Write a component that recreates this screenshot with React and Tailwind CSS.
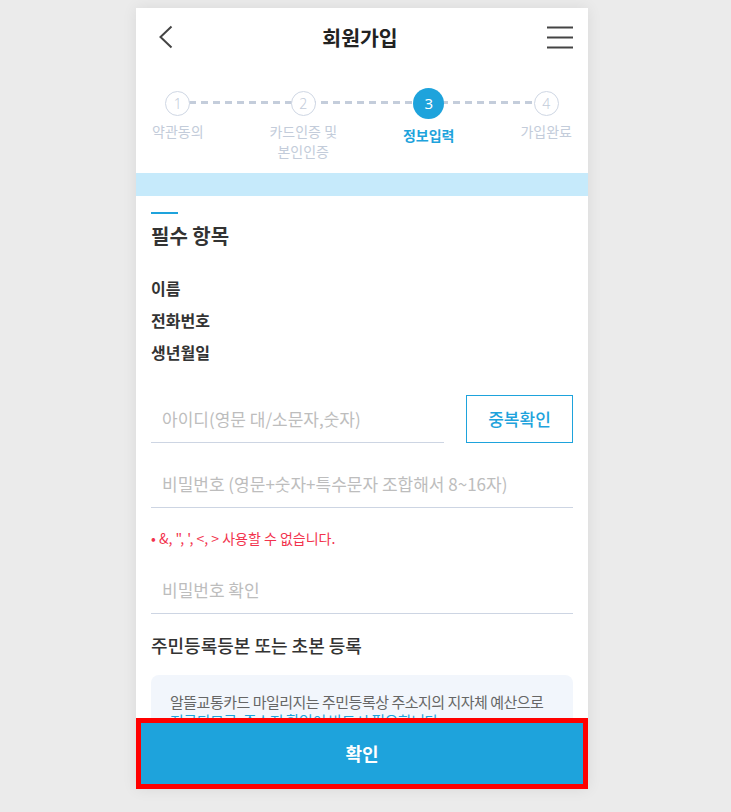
const steps = [
  { no: 1, label: ["약관동의"] },
  { no: 2, label: ["카드인증 및", "본인인증"] },
  { no: 3, label: ["정보입력"], active: true },
  { no: 4, label: ["가입완료"] },
];

const Stepper = () => (
  <div className="relative h-[107px] px-[16px] pt-[21px]">
    <div className="absolute left-[41px] right-[42px] top-[35px] h-[3px] bg-[repeating-linear-gradient(to_right,#c4cddb_0_7px,transparent_7px_12px)]" />
    <div className="relative flex justify-between">
      {steps.map((s) => (
        <div key={s.no} className="flex flex-col items-center">
          <div className="h-[32px] flex items-center justify-center">
            {s.active ? (
              <div className="w-[31px] h-[31px] rounded-full bg-[#1ea3dc] text-white text-[15px] flex items-center justify-center font-['Noto_Sans',sans-serif]">
                {s.no}
              </div>
            ) : (
              <div className="w-[25px] h-[25px] rounded-full bg-white border-[1.5px] border-[#cfd7e4] text-[#c3ccda] text-[14px] font-light flex items-center justify-center font-['Noto_Sans',sans-serif]">
                {s.no}
              </div>
            )}
          </div>
          <div
            className={`text-[14px] leading-[20px] text-center ${
              s.active
                ? "mt-[6px] text-[#1ea3dc] font-bold"
                : "mt-[2px] text-[#c3ccda]"
            }`}
          >
            {s.label.map((l) => (
              <div key={l}>{l}</div>
            ))}
          </div>
        </div>
      ))}
    </div>
  </div>
);

const LineInput = ({ placeholder, className = "" }) => (
  <input
    placeholder={placeholder}
    className={`h-[48px] border-b border-[#cdd5e3] pl-[11px] text-[17px] text-[#333] placeholder:text-[#bdbdbd] outline-none bg-transparent ${className}`}
  />
);

export default function App() {
  return (
    <div className="h-[812px] bg-[#ebebeb] pt-[8px] font-['Noto_Sans_CJK_KR',sans-serif]">
      <div className="relative ml-[136px] w-[452px] h-[781px] bg-white overflow-hidden shadow-[0_0_14px_rgba(0,0,0,0.08)]">
        {/* header */}
        <div className="h-[58px] flex items-center justify-between pl-[22px] pr-[15px]">
          <svg width="15" height="24" viewBox="0 0 15 24" fill="none">
            <path d="M13.5 1.5 L2.5 12 L13.5 22.5" stroke="#444" strokeWidth="2" />
          </svg>
          <h1 className="text-[20.5px] font-bold text-[#222]">회원가입</h1>
          <svg width="26" height="23" viewBox="0 0 26 23" fill="none">
            <path d="M0 1.5H26M0 11.5H26M0 21.5H26" stroke="#444" strokeWidth="2" />
          </svg>
        </div>

        <Stepper />

        <div className="h-[23px] bg-[#c6eafb]" />

        <div className="px-[15px] pt-[16px]">
          <div className="w-[27px] h-[2px] bg-[#1ea3dc]" />
          <h2 className="mt-[9px] text-[20px] leading-[26px] font-bold text-[#333]">
            필수 항목
          </h2>

          <ul className="mt-[23px] text-[16px] leading-[32px] font-bold text-[#333]">
            <li>이름</li>
            <li>전화번호</li>
            <li>생년월일</li>
          </ul>

          <div className="mt-[27px] flex items-end gap-[22px]">
            <LineInput placeholder="아이디(영문 대/소문자,숫자)" className="flex-1 min-w-0" />
            <button className="w-[107px] h-[48px] border-[1.5px] border-[#1ea3dc] text-[#1ea3dc] text-[17px] font-medium">
              중복확인
            </button>
          </div>

          <LineInput
            placeholder="비밀번호 (영문+숫자+특수문자 조합해서 8~16자)"
            className="mt-[17px] w-full"
          />

          <p className="mt-[21px] text-[14px] leading-[18px] text-[#f2334d]">
            • &amp;, ", ', &lt;, &gt; 사용할 수 없습니다.
          </p>

          <LineInput placeholder="비밀번호 확인" className="mt-[19px] w-full" />

          <h3 className="mt-[19px] text-[18px] leading-[24px] font-medium text-[#333]">
            주민등록등본 또는 초본 등록
          </h3>

          <div className="mt-[18px] rounded-[8px] bg-[#f2f6fc] px-[19px] pt-[17px] pb-[20px] text-[15px] leading-[19px] tracking-[-0.5px] text-[#666]">
            <p>알뜰교통카드 마일리지는 주민등록상 주소지의 지자체 예산으로</p>
            <p className="text-[#1ea3dc]">지급되므로, 주소지 확인이 반드시 필요합니다.</p>
          </div>
        </div>

        <button className="absolute left-0 right-0 bottom-0 h-[71px] bg-[#1ea3dc] border-[5px] border-[#ff0000] text-white text-[18px] font-bold">
          확인
        </button>
      </div>
    </div>
  );
}
